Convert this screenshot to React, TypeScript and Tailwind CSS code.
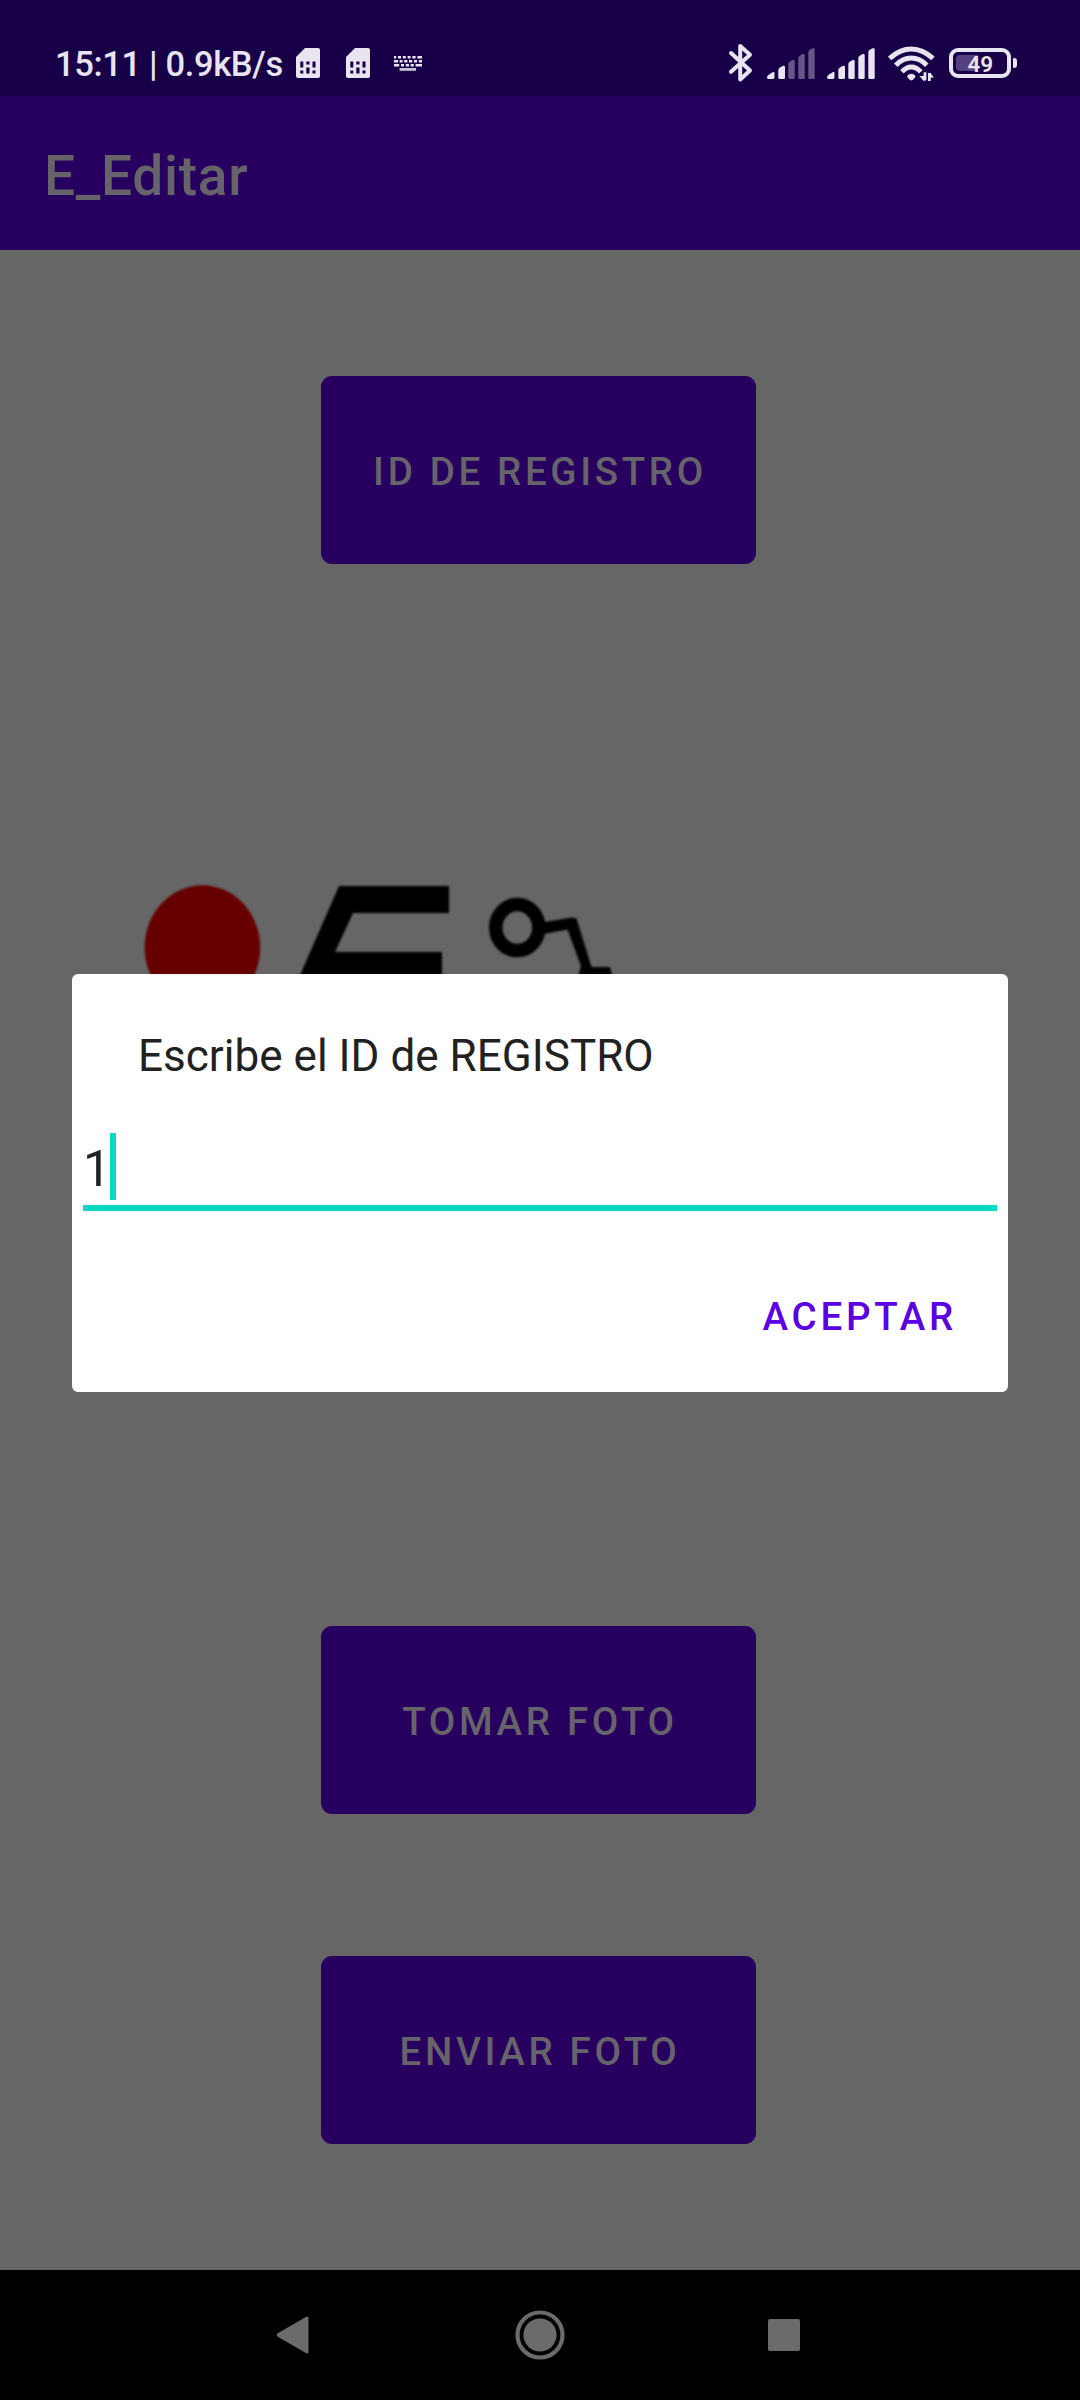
const fg = "#e8e4f0";

function Sim() {
  return (
    <svg className="block h-[30px] w-[24px]" viewBox="0 0 24 30">
      <path
        fillRule="evenodd"
        fill={fg}
        d="M9 0H22Q24 0 24 2V28Q24 30 22 30H2Q0 30 0 28V9ZM4.3 13.5V19.5H7.3V13.5ZM10.3 13.5V16.5H13.5V13.5ZM16.5 13.5V19.5H19.5V13.5ZM4.3 22.5V25.5H7.3V22.5ZM10.3 19.5V25.5H13.5V19.5ZM16.5 22.5V25.5H19.5V22.5Z"
      />
    </svg>
  );
}

function Keyboard() {
  return (
    <svg className="block h-[16px] w-[28px]" viewBox="0 0 28 16" fill="none" stroke={fg}>
      <path strokeWidth="2.4" d="M0 1.2H2.2M4 1.2H7M8.8 1.2H11.8M13.6 1.2H16.6M18.4 1.2H21.6M23.4 1.2H28" />
      <path strokeWidth="2.4" d="M0 5.2H4M5.6 5.2H8.6M10.2 5.2H13.4M15 5.2H18.2M20 5.2H23M24.8 5.2H28" />
      <path strokeWidth="2.4" d="M0 9.2H5.2M7 9.2H10M11.8 9.2H15M16.6 9.2H19.8M21.6 9.2H28" />
      <path strokeWidth="2.8" opacity=".85" d="M5.6 13.4H22" />
    </svg>
  );
}

function Bluetooth() {
  return (
    <svg className="block h-[40px] w-[26px]" viewBox="0 0 26 40" fill="none" stroke={fg} strokeWidth="4" strokeLinecap="round" strokeLinejoin="round">
      <path d="M4 10L23 27.5L13.2 36.5V3L23 11.7L4 28.8" />
    </svg>
  );
}

function Signal({ dim }: { dim?: boolean }) {
  const rest = dim ? 0.38 : 1;
  return (
    <svg className="block h-[32px] w-[48px]" viewBox="0 0 48 32" fill={fg}>
      <path d="M0 29.5Q0 27.5 2 26.5L6 24Q7.5 23.5 7.5 25V29Q7.5 31 6 31H1.5Q0 31 0 29.5Z" />
      <path d="M11.3 22Q11.3 20.5 13 19.5L16 17.8Q18 17.5 18 19V29.5Q18 31 16.5 31H12.8Q11.3 31 11.3 29.5Z" />
      <path opacity={rest} d="M21.3 16Q21.3 14.7 22.8 13.7L25.5 12Q27.7 11.5 27.7 13V29.5Q27.7 31 26.2 31H22.8Q21.3 31 21.3 29.5Z" />
      <path opacity={rest} d="M31.3 10Q31.3 8.7 32.8 7.7L35.5 6Q37.7 5.5 37.7 7V29.5Q37.7 31 36.2 31H32.8Q31.3 31 31.3 29.5Z" />
      <path opacity={rest} d="M41.3 4Q41.3 2.7 42.8 1.7L45.5 .3Q47.7 -.2 47.7 1.5V29.5Q47.7 31 46.2 31H42.8Q41.3 31 41.3 29.5Z" />
    </svg>
  );
}

function Wifi() {
  return (
    <svg className="block h-[36px] w-[48px]" viewBox="0 0 48 36" fill="none" stroke={fg}>
      <path strokeWidth="5" d="M1.6 12.4Q12 3 23.3 3T45 12.4" />
      <path strokeWidth="5" d="M7.8 19.2Q14.8 12 23.3 12T38.8 19.2" />
      <path strokeWidth="4.8" d="M14 25.8Q18.2 21 23.3 21T32.8 25.8" />
      <path fill={fg} stroke="none" d="M19 30Q23.3 25.6 27.6 30Q27 32.6 24.6 34Q23.3 34.8 22 34Q19.6 32.6 19 30Z" />
      <path strokeWidth="2.8" d="M37 26.2V34.5M41.4 27V35" />
      <path fill={fg} stroke="none" d="M31.5 30H36V35.4ZM42 26.4L46 31.5H42Z" />
    </svg>
  );
}

function Battery() {
  return (
    <div className="flex items-center gap-[2px]">
      <div className="relative flex h-[30px] w-[62px] items-center rounded-[9px] border-4 border-[#e8e4f0] pl-[3px]">
        <div className="h-[16px] w-[22px] rounded-l-[4px] bg-[#54407c]" />
        <span className="absolute left-[14.5px] top-[-1px] text-[22.5px] font-semibold leading-[26px]">49</span>
      </div>
      <div className="h-[10px] w-[4px] rounded-r-[3px] rounded-l-[1px] bg-[#e8e4f0]" />
    </div>
  );
}

function StatusBar() {
  return (
    <header className="flex h-24 items-start bg-[#170047] text-[#e8e4f0]">
      <span className="ml-[55px] mt-[43px] w-[241px] whitespace-nowrap text-[34.5px] font-medium leading-[42px] tracking-[-0.35px]">15:11 | 0.9kB/s</span>
      <div className="mt-12 flex gap-[26px]">
        <Sim />
        <Sim />
      </div>
      <div className="ml-6 mt-14">
        <Keyboard />
      </div>
      <div className="ml-[305px] mt-[43px]">
        <Bluetooth />
      </div>
      <div className="ml-[14px] mt-12 flex gap-3">
        <Signal dim />
        <Signal />
      </div>
      <div className="ml-[13px] mt-[46px]">
        <Wifi />
      </div>
      <div className="ml-[13px] mt-12">
        <Battery />
      </div>
    </header>
  );
}

function MainButton({ children }: { children: string }) {
  return (
    <button className="flex h-[188px] w-[435px] items-center justify-center rounded-[11px] bg-[#27005f] pl-[3px] pt-[3px] text-[38.5px] font-medium tracking-[3.65px] text-[#67636b]">
      {children}
    </button>
  );
}

function Logo() {
  return (
    <svg className="block h-[130px] w-[480px] blur-[1.1px]" viewBox="140 880 480 130">
      <ellipse cx="202.4" cy="947.5" rx="57.8" ry="62.3" fill="#660000" />
      <path d="M339 886H449V913H353L335 952H442V1005H287Z" />
      <ellipse cx="517.3" cy="927.6" rx="21.6" ry="23" fill="none" stroke="#000" strokeWidth="13.5" />
      <path d="M542 922.5L572 917.5L576.5 918.5L591.5 967H610L613 980H577L581 966L567.5 929.5L544 934Z" />
    </svg>
  );
}

function Dialog() {
  return (
    <div className="absolute left-[72px] top-[974px] flex h-[418px] w-[936px] flex-col rounded-[6px] bg-white text-[#212121]">
      <h2 className="ml-[66px] mt-[56px] text-[44px] leading-[52px] tracking-[0.03px]">Escribe el ID de REGISTRO</h2>
      <div className="ml-[11px] mt-[51px] flex h-[78px] w-[914px] items-start border-b-[6px] border-[#0ad8c4]">
        <span className="w-[27px] text-[49.5px] leading-[73px]">1</span>
        <span className="h-[67px] w-[6px] bg-[#0ad8c4]" />
      </div>
      <button className="mr-[51px] mt-[83px] self-end text-[38.5px] font-medium leading-[46px] tracking-[3.75px] text-[#5c00e4]">ACEPTAR</button>
    </div>
  );
}

function NavBar() {
  return (
    <nav className="flex h-[130px] items-center bg-black">
      <svg className="ml-[276px] block h-[40px] w-[33px]" viewBox="0 0 33 40" fill="#6b6b6b">
        <path d="M1.3 18.5L30.3 1.7Q32.4 .8 32.5 3V37Q32.4 39.2 30.3 38.3L1.3 21.5Q.2 20 1.3 18.5Z" />
      </svg>
      <svg className="ml-[206px] block h-[50px] w-[50px]" viewBox="0 0 50 50" fill="#6b6b6b">
        <circle cx="25" cy="25" r="22.5" fill="none" stroke="#6b6b6b" strokeWidth="4.2" />
        <circle cx="25" cy="25" r="16.6" />
      </svg>
      <div className="ml-[203px] h-[32px] w-[32px] rounded-[2px] bg-[#6b6b6b]" />
    </nav>
  );
}

export default function App() {
  return (
    <div className="relative flex h-[2400px] w-[1080px] flex-col overflow-hidden bg-[#666666] font-['Roboto',sans-serif]">
      <StatusBar />
      <div className="flex h-[154px] items-center bg-[#27005f] pl-11 pt-[5px] text-[55px] font-medium leading-[64px] tracking-[0.7px] text-[#67636b]">E_Editar</div>
      <main className="flex h-[2020px] flex-col pl-[321px] pt-[126px]">
        <MainButton>ID DE REGISTRO</MainButton>
        <div className="-ml-[181px] mt-[316px] h-[130px]">
          <Logo />
        </div>
        <div className="mt-[616px] flex flex-col gap-[142px]">
          <MainButton>TOMAR FOTO</MainButton>
          <MainButton>ENVIAR FOTO</MainButton>
        </div>
      </main>
      <NavBar />
      <Dialog />
    </div>
  );
}
